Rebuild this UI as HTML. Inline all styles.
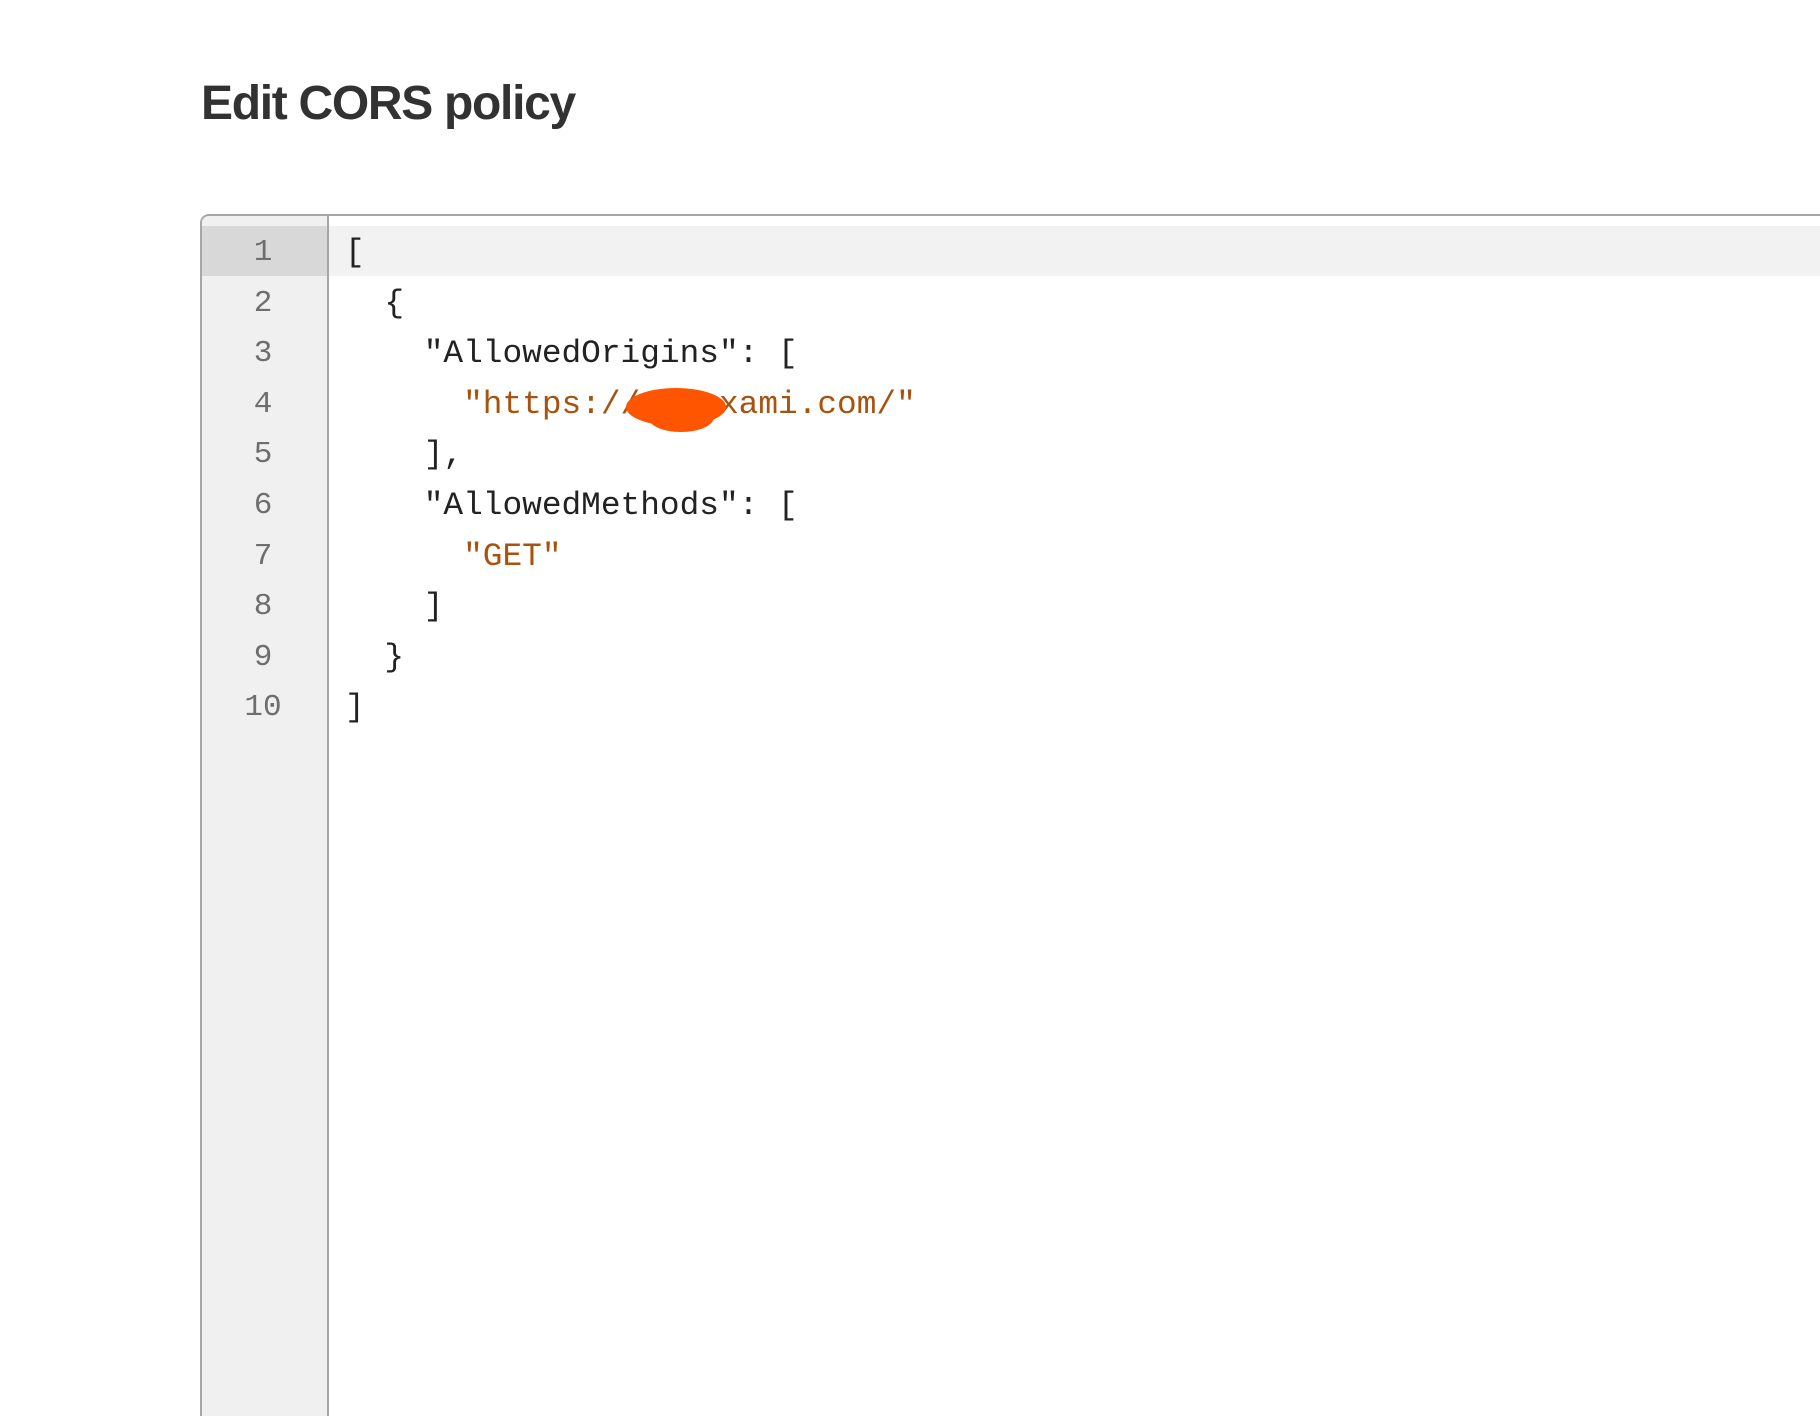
<!DOCTYPE html>
<html><head><meta charset="utf-8"><style>
html,body{margin:0;padding:0;background:#fff;width:1820px;height:1285px;overflow:hidden;}
h1{position:absolute;left:201px;top:74px;margin:0;font:700 48px/60px "Liberation Sans",sans-serif;letter-spacing:-1.3px;color:#323232;}
.box{position:absolute;left:200px;top:214px;width:1700px;height:1200px;border:2px solid #a6a6a6;border-bottom:none;border-radius:9px 0 0 0;background:#fff;overflow:hidden;}
.gut{position:absolute;left:0;top:0;width:125px;height:100%;background:#f0f0f0;border-right:2px solid #a6a6a6;}
.hl{position:absolute;left:0;top:10px;width:100%;height:50px;background:#f2f2f2;}
.hlg{position:absolute;left:0;top:10px;width:125px;height:50px;background:#d8d8d8;}
.ln{position:absolute;left:0;width:122px;text-align:center;font:31px/50.6px "Liberation Mono",monospace;color:#6e6e6e;}
.code{position:absolute;left:143px;top:12px;font:32.8px/50.6px "Liberation Mono",monospace;color:#222;white-space:pre;}
.s{color:#a8520f;}
.blob{position:absolute;background:#ff5500;border-radius:50%;}
</style></head><body>
<h1>Edit CORS policy</h1>
<div class="box">
<div class="hl"></div>
<div class="gut"></div>
<div class="hlg"></div>
<div class="ln" style="top:12px">1<br>2<br>3<br>4<br>5<br>6<br>7<br>8<br>9<br>10</div>
<div class="code">[
  {
    "AllowedOrigins": [
      <span class="s">"https://xxxxxami.com/"</span>
    ],
    "AllowedMethods": [
      <span class="s">"GET"</span>
    ]
  }
]</div>
<div class="blob" style="left:424px;top:172px;width:100px;height:38px;"></div>
<div class="blob" style="left:446px;top:186px;width:66px;height:30px;"></div>
</div>
</body></html>
